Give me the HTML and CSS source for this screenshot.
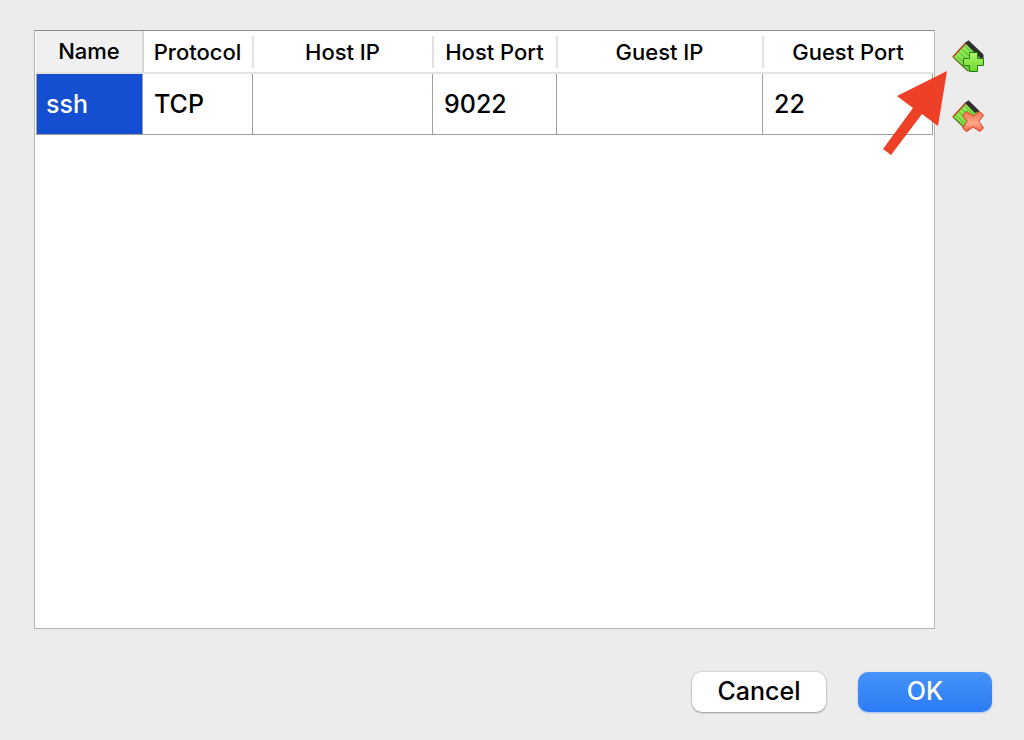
FILE: index.html
```html
<!DOCTYPE html>
<html lang="en">
<head>
  <meta charset="UTF-8" />
  <meta name="viewport" content="width=device-width, initial-scale=1.0"/>
  <title>Port Forwarding Rules</title>
  <link rel="stylesheet" href="styles.css">
</head>
<body>

  <main class="dialog">
    <div class="rules">
      <div class="rules-panel">
        <table class="rules-table">
          <colgroup>
            <col class="col-name">
            <col class="col-protocol">
            <col class="col-host-ip">
            <col class="col-host-port">
            <col class="col-guest-ip">
            <col>
          </colgroup>
          <thead>
            <tr>
              <th class="sorted"><span>Name</span></th>
              <th><span>Protocol</span></th>
              <th><span>Host IP</span></th>
              <th><span>Host Port</span></th>
              <th><span>Guest IP</span></th>
              <th><span>Guest Port</span></th>
            </tr>
          </thead>
          <tbody>
            <tr>
              <td class="selected">ssh</td>
              <td>TCP</td>
              <td></td>
              <td>9022</td>
              <td></td>
              <td>22</td>
            </tr>
          </tbody>
        </table>
      </div>

      <div class="toolbar">
        <button type="button" class="tool" aria-label="Add rule">
          <svg viewBox="0 0 32 32" width="32" height="32">
            <defs>
              <linearGradient id="card" x1="0" y1="0" x2="1" y2="1">
                <stop offset="0" stop-color="#a2f25c"/>
                <stop offset="1" stop-color="#62cf34"/>
              </linearGradient>
              <linearGradient id="plus" x1="0" y1="0" x2="0" y2="1">
                <stop offset="0" stop-color="#b4f56c"/>
                <stop offset="1" stop-color="#67d92c"/>
              </linearGradient>
            </defs>
            <path d="M1 17 16 1.500 31 17 16 31Z" fill="url(#card)" stroke="#3c8a20"/>
            <path d="M4 15 17 28M7 12 20 25M10 9 23 22M13 6 25 18" stroke="#4fae30" stroke-width=".8"/>
            <path d="M.800 17 14 2.500" fill="none" stroke="#c83c20" stroke-width="1.300"/>
            <path d="M16 31 1 17" stroke="#6c7a28" stroke-width="1.200"/>
            <path d="M13 3 16.500 .300 31.500 14.500 31.500 20 27 17Z" fill="#303030"/>
            <path d="M17.500 12.500h8v6h6v7h-6v6h-8v-6h-6v-7h6z" fill="url(#plus)" stroke="#287a14"/>
          </svg>
        </button>
        <button type="button" class="tool" aria-label="Remove rule">
          <svg viewBox="0 0 32 32" width="32" height="32">
            <defs>
              <linearGradient id="cross" x1="0" y1="0" x2="0" y2="1">
                <stop offset="0" stop-color="#ff7350"/>
                <stop offset=".6" stop-color="#ffa58a"/>
                <stop offset="1" stop-color="#f65f3c"/>
              </linearGradient>
            </defs>
            <path d="M1 17 16 1.500 29 14 16 31Z" fill="url(#card)" stroke="#3c8a20"/>
            <path d="M4 15 17 28M7 12 20 25M10 9 23 22M13 6 25 18" stroke="#4fae30" stroke-width=".8"/>
            <path d="M.800 17 14 2.500" fill="none" stroke="#c83c20" stroke-width="1.300"/>
            <path d="M16 31 1 17" stroke="#6c7a28" stroke-width="1.200"/>
            <path d="M13 3 16.500 .300 27.500 11 23 13Z" fill="#303030"/>
            <path d="M14.500 11.500 21 16 27.500 11.500 31.500 15 27 21.500 31.500 28 28 31.500 21 27 14.500 31.500 10.500 28 15 21.500 10.500 15Z" fill="url(#cross)" stroke="#d93a20" stroke-linejoin="round"/>
          </svg>
        </button>
        <!-- pointer to the add button -->
        <svg class="pointer" viewBox="0 0 64 84" width="64" height="84" aria-hidden="true">
          <path d="M64 0 14 25 30 37 0 78 8 84 39 43 55 55Z" fill="#ed4026"/>
        </svg>
      </div>
    </div>

    <div class="actions">
      <button type="button" class="btn">Cancel</button>
      <button type="submit" class="btn btn-primary">OK</button>
    </div>
  </main>

</body>
</html>
```
FILE: styles.css
```css
* { box-sizing: border-box; }
body { margin: 0; font-family: Inter, "Liberation Sans", sans-serif; color: #000; background: #ececec; }
button { font-family: inherit; cursor: pointer; }

.dialog { display: flex; flex-direction: column; gap: 43px; min-height: 100vh; padding: 30px 32px 28px 34px; }

.rules { flex: 1; display: flex; gap: 17px; }
.rules-panel { flex: 1; padding: 0 1px; background: #fff; border: 1px solid #b4b4b4; border-top-color: #8c8c8c; }

.rules-table { width: 100%; table-layout: fixed; border-collapse: separate; border-spacing: 0; }
.col-name { width: 107px; }
.col-protocol { width: 110px; }
.col-host-ip { width: 180px; }
.col-host-port { width: 124px; }
.col-guest-ip { width: 206px; }

th { height: 43px; padding: 5px 0 4px; border-bottom: 2px solid #e2e2e2; font-size: 22px; font-weight: 500; text-align: center; white-space: nowrap; }
th span { display: block; margin-right: -1px; line-height: 32px; border-right: 2px solid #e2e2e2; }
th:last-child span { margin-right: 0; border-right: none; }
th.sorted { padding: 0; background: #f0f0f0; }
th.sorted span { line-height: 41px; border-right-color: #d4d4d4; }

td { height: 61px; padding: 0 11px; border-right: 1px solid #a0a0a0; border-bottom: 1px solid #a0a0a0; font-size: 25px; font-weight: 500; line-height: 32px; }
td.selected { padding: 0 9px; color: #fff; background: #134fd0; border-left: 1px solid #a0a0a0; }

.toolbar { position: relative; display: flex; flex-direction: column; gap: 28px; padding: 10px 8px 0 0; }
.tool { display: block; width: 32px; height: 32px; padding: 0; background: none; border: none; }
.tool svg { display: block; }
.pointer { position: absolute; top: 41px; right: 45px; pointer-events: none; }

.actions { display: flex; justify-content: flex-end; gap: 32px; }
.btn { width: 134px; height: 40px; padding: 0 0 2px; color: #000; background: #fff; border: none; border-radius: 10px; box-shadow: 0 0 1px 1px rgba(0,0,0,0.08), 0 1px 2px rgba(0,0,0,0.3); font-size: 25px; font-weight: 500; line-height: 32px; }
.btn-primary { color: #fff; background: linear-gradient(#4693f8, #2b7bf6); box-shadow: 0 1px 2px rgba(43,123,246,0.4); }
```
